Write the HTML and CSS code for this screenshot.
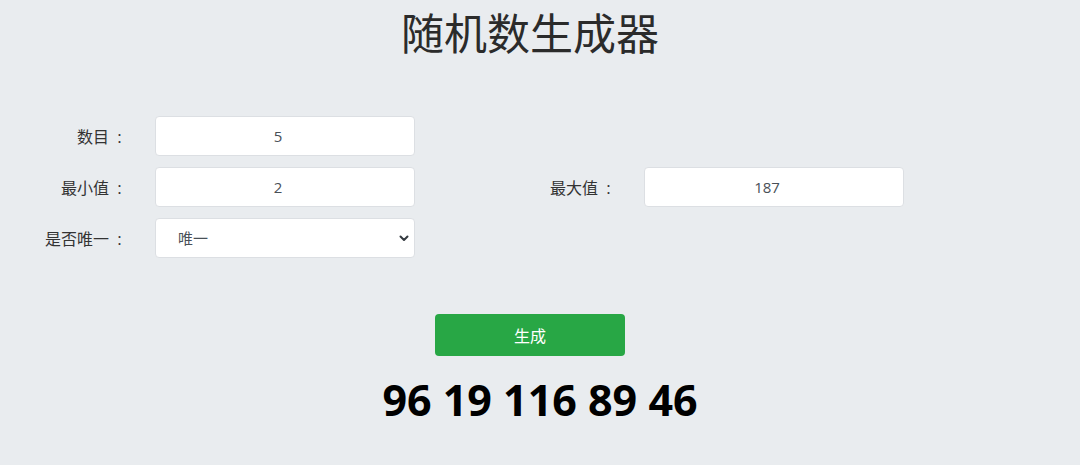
FILE: index.html
```html
<!DOCTYPE html>
<html lang="zh-CN">
<head>
    <meta charset="UTF-8"/>
    <title>随机数生成器</title>
    <link rel="stylesheet" href="styles.css">
</head>
<body>
<div class="page">
    <h1>随机数生成器</h1>
    <form id="genForm" class="form-grid">
        <label for="count">数目<span class="colon">:</span></label>
        <input type="text" id="count" value="5" />
        <span></span>
        <span></span>

        <label for="min">最小值<span class="colon">:</span></label>
        <input type="text" id="min" value="2" />
        <label for="max">最大值<span class="colon">:</span></label>
        <input type="text" id="max" value="187" />

        <label for="unique">是否唯一<span class="colon">:</span></label>
        <div class="select-wrap">
            <select id="unique">
                <option>唯一</option>
                <option>不唯一</option>
            </select>
            <svg class="chevron" width="10" height="7" viewBox="0 0 10 7">
                <path d="M1.5 1.5 L5 5 L8.5 1.5" fill="none" stroke="#343a40" stroke-width="2" stroke-linecap="round" stroke-linejoin="round"/>
            </svg>
        </div>
    </form>
    <div class="actions">
        <button type="button" class="btn-generate">生成</button>
    </div>
    <div id="result" class="result">96 19 116 89 46</div>
</div>
</body>
</html>
```

FILE: styles.css
```css
body {
    background-color: #e9ecef;
    font-family: "Open Sans", "Noto Sans CJK SC", sans-serif;
    font-size: 16px;
    color: #333;
    margin: 0;
}
.page {
    width: 1080px;
}
h1 {
    text-align: center;
    font-size: 43px;
    font-weight: normal;
    line-height: 50px;
    color: #2b2b2b;
    margin: 9px 0 0;
    padding-right: 20px;
}
.form-grid {
    display: grid;
    grid-template-columns: 125px 260px 169px 260px;
    grid-auto-rows: 40px;
    column-gap: 30px;
    row-gap: 11px;
    margin-top: 57px;
    align-items: center;
}
label {
    text-align: right;
    color: #333;
    font-size: 16px;
}
.colon {
    display: inline-block;
    width: 11px;
    margin-left: 5px;
    text-align: center;
    font-size: 17px;
}
input, select {
    box-sizing: border-box;
    width: 260px;
    height: 40px;
    border: 1px solid #dcdfe3;
    border-radius: 4px;
    background-color: #fff;
    font-family: "Open Sans", "Noto Sans CJK SC", sans-serif;
    font-size: 15px;
    color: #495057;
    text-align: center;
    padding: 0 14px 0 0;
    outline: none;
}
.select-wrap {
    position: relative;
    height: 40px;
}
select {
    appearance: none;
    -webkit-appearance: none;
    text-align: left;
    padding-left: 22px;
}
.chevron {
    position: absolute;
    right: 6px;
    top: 17px;
    pointer-events: none;
}
.actions {
    display: flex;
    justify-content: center;
    margin-top: 56px;
    padding-right: 20px;
}
.btn-generate {
    width: 190px;
    height: 42px;
    border: none;
    border-radius: 4px;
    background-color: #28a745;
    color: #fff;
    font-family: "Open Sans", "Noto Sans CJK SC", sans-serif;
    font-size: 16px;
    cursor: pointer;
}
.result {
    text-align: center;
    font-size: 43px;
    font-weight: bold;
    line-height: 56px;
    color: #000;
    margin-top: 16px;
}
```
